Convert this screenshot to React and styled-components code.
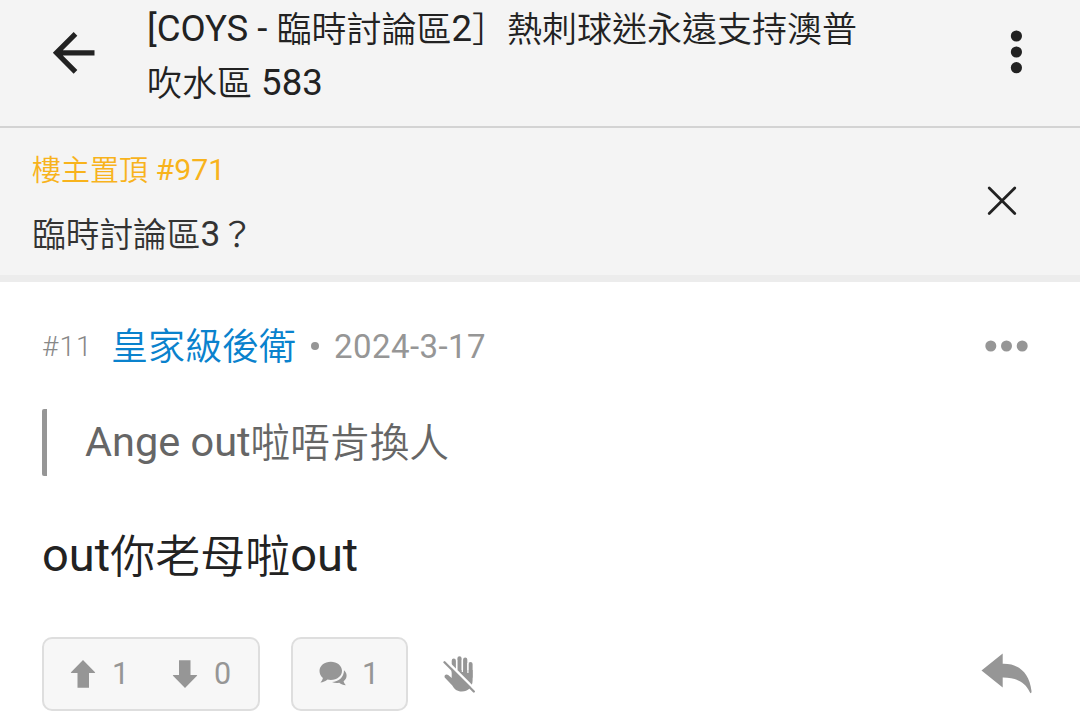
import React from "react";
import styled, { createGlobalStyle } from "styled-components";

const GlobalStyle = createGlobalStyle`
  * {
    box-sizing: border-box;
  }

  body {
    margin: 0;
    background: #fff;
    font-family: Roboto, "Noto Sans CJK TC", sans-serif;
    font-weight: 350;
    color: #222;
  }

  button {
    padding: 0;
    border: none;
    background: none;
    font: inherit;
    color: inherit;
  }

  svg {
    display: block;
  }
`;

const Page = styled.main`
  display: flex;
  flex-direction: column;
  height: 711px;
  overflow: hidden;
`;

const TopBar = styled.header`
  display: flex;
  align-items: flex-start;
  flex: none;
  height: 128px;
  padding: 0 58px 0 51px;
  background: #f4f4f4;
  border-bottom: 2px solid #d3d3d3;
`;

const BackButton = styled.button`
  flex: none;
  width: 96px;
  padding-top: 31px;
`;

// latin runs are set slightly larger than the CJK text and sit a bit above its baseline
const Latin = styled.span`
  font-size: 1.045em;
  font-weight: 400;
  line-height: 1;
  vertical-align: ${(props) => props.$lift || 1}px;
`;

const Title = styled.h1`
  flex: 1;
  margin: 0;
  padding-top: 4px;
  font-size: 35px;
  font-weight: 350;
  line-height: 54px;
  white-space: nowrap;
`;

const MenuButton = styled.button`
  padding-top: 29px;
`;

const Pinned = styled.section`
  display: flex;
  justify-content: space-between;
  align-items: flex-start;
  flex: none;
  height: 154px;
  padding: 21px 62px 0 32px;
  background: #f4f4f4;
  border-bottom: 7px solid #ececec;
`;

const PinnedLabel = styled.div`
  font-size: 29px;
  line-height: 44px;
  color: #f8b31c;
`;

const PinnedText = styled.div`
  margin-top: 19px;
  font-size: 33.7px;
  line-height: 48px;
  color: #333;
`;

const CloseButton = styled.button`
  padding-top: 36px;
`;

const Post = styled.article`
  padding: 40px 48px 0 42px;
`;

const PostHeader = styled.div`
  display: flex;
  align-items: center;
  height: 48px;
  padding-right: 4px;
  color: #969696;
`;

const Floor = styled.span`
  width: 69px;
  color: #888;
  font-size: 28px;
  letter-spacing: 1.1px;
`;

const Author = styled.span`
  width: 185px;
  padding-top: 4px;
  font-size: 37px;
  line-height: 48px;
  color: #0a82cd;
  white-space: nowrap;
`;

const Dot = styled.span`
  width: 8px;
  height: 8px;
  margin: 0 15px;
  border-radius: 50%;
  background: #969696;
`;

const PostDate = styled.span`
  flex: 1;
  font-size: 33px;
  font-weight: 400;
  letter-spacing: 0.45px;
`;

const Quote = styled.blockquote`
  margin: 39px 0 0;
  height: 67px;
  padding: 2px 0 0 38px;
  border-left: 5px solid #969696;
  border-radius: 2px;
  font-size: 39.7px;
  line-height: 66px;
  color: #666;
`;

const Body = styled.p`
  margin: 50px 0 0;
  height: 64px;
  font-size: 45px;
  line-height: 64px;
`;

const Actions = styled.div`
  display: flex;
  align-items: center;
  height: 74px;
  margin-top: 47px;
  color: #969696;
`;

const Pill = styled.div`
  display: flex;
  align-items: center;
  width: ${(props) => props.$width}px;
  height: 74px;
  margin-right: 31px;
  padding-left: 26px;
  background: #f7f7f7;
  border: 2px solid #dedede;
  border-radius: 10px;
`;

const Count = styled.span`
  width: ${(props) => props.$width || 30}px;
  margin-left: ${(props) => props.$gap}px;
  font-size: 30.5px;
  font-weight: 400;
  line-height: 40px;
`;

const MuteButton = styled.button`
  flex: 1;
  margin-left: 4px;
`;

const BackIcon = () => (
  <svg width="44" height="44" viewBox="0 0 44 44" fill="none" stroke="#222" strokeWidth="5.2">
    <path d="M43.500 21.800H5.500M24.500 2.800 5.500 21.800l19 19" />
  </svg>
);

const MenuIcon = () => (
  <svg width="12" height="46" viewBox="0 0 12 46" fill="#222">
    <circle cx="6.4" cy="7" r="5.6" />
    <circle cx="6.4" cy="23" r="5.6" />
    <circle cx="6.4" cy="38.7" r="5.6" />
  </svg>
);

const CloseIcon = () => (
  <svg width="32" height="32" viewBox="0 0 32 32" fill="none" stroke="#222" strokeWidth="2.8" strokeLinecap="round">
    <path d="M3.200 3 28.800 28.600M28.800 3 3.200 28.600" />
  </svg>
);

const MoreIcon = () => (
  <svg width="44" height="12" viewBox="0 0 44 12" fill="#969696">
    <circle cx="6.8" cy="6" r="5.5" />
    <circle cx="22.5" cy="6" r="5.5" />
    <circle cx="38.2" cy="6" r="5.5" />
  </svg>
);

const VoteIcon = ({ down }) => (
  <svg width="26" height="30" viewBox="0 0 26 30" fill="#969696">
    <path
      d="M13 1 25 13.200q.6.8-.5.8H19v14.800H7.500V14H1.500q-1.100 0-.5-.8z"
      transform={down ? "rotate(180 13 15)" : undefined}
    />
  </svg>
);

const CommentsIcon = () => (
  <svg width="28" height="26" viewBox="0 0 28 26" fill="#969696">
    <path d="M11.800.7C18 .7 23 4.600 23 9.800S18 19 11.800 19c-1.200 0-2.300-.1-3.300-.4C6.400 20.300 4 21.400 1.400 21.500c1.300-1.300 2.100-2.700 2.500-4.500C1.600 15.300.5 12.700.5 9.800.5 4.600 5.600.7 11.800.7z" />
    <path d="M25 9.200c1.700 1.500 2.600 3.300 2.600 5.300 0 2.300-1.100 4.300-3 5.700.3 1.500 1 2.800 2.300 4-2.700-.1-4.800-1-6.700-2.500-2.500.5-4.900.3-7.200-.6C19.500 20.700 25 16.200 25 9.200z" />
  </svg>
);

const HandOffIcon = () => (
  <svg width="33" height="38" viewBox="0 0 33 38" fill="none">
    <path
      d="M10.800 17V5.700M16.500 17V3.300M22.200 17V4.500M27.500 22V9"
      stroke="#969696"
      strokeWidth="4.2"
      strokeLinecap="round"
    />
    <path
      d="M8.700 15h20.900v10.500c0 6.500-4.600 11-10.800 11-4.700 0-7.500-2.200-9.500-6L1.700 22.400c-.9-2.200 1.600-3.800 3.500-2.400l3.500 3z"
      fill="#969696"
    />
    <path d="M13.650 5v10M19.350 5v12M24.900 8v10" stroke="#fff" strokeWidth="1.2" />
    <path d="M3 5.500 34 36.500" stroke="#fff" strokeWidth="2.6" />
    <path d="M1.500 7.200 30.800 36.500" stroke="#969696" strokeWidth="2.3" strokeLinecap="round" />
  </svg>
);

const ReplyIcon = () => (
  <svg width="51" height="42" viewBox="0 0 51 42" fill="#969696">
    <path d="M.5 17.600 21.700.6v10.100C37 10.300 48.300 19 50.500 38c.2 2.300-1.200 2.900-1.800 1C44 28.600 34.500 24.500 21.700 24.600v9.900z" />
  </svg>
);

const App = () => {
  return (
    <>
      <GlobalStyle />
      <Page>
        <TopBar>
          <BackButton aria-label="Back">
            <BackIcon />
          </BackButton>
          <Title>
            <Latin>[COYS - </Latin>臨時討論區<Latin>2</Latin>］熱刺球迷永遠支持澳普
            <br />
            吹水區<Latin> 583</Latin>
          </Title>
          <MenuButton aria-label="Menu">
            <MenuIcon />
          </MenuButton>
        </TopBar>
        <Pinned>
          <div>
            <PinnedLabel>
              樓主置頂<Latin> #971</Latin>
            </PinnedLabel>
            <PinnedText>
              臨時討論區<Latin>3</Latin>？
            </PinnedText>
          </div>
          <CloseButton aria-label="Close">
            <CloseIcon />
          </CloseButton>
        </Pinned>
        <Post>
          <PostHeader>
            <Floor>#11</Floor>
            <Author>皇家級後衛</Author>
            <Dot />
            <PostDate>2024-3-17</PostDate>
            <MoreIcon />
          </PostHeader>
          <Quote>
            <Latin>Ange out</Latin>啦唔肯換人
          </Quote>
          <Body>
            <Latin $lift={2}>out</Latin>你老母啦<Latin $lift={2}>out</Latin>
          </Body>
          <Actions>
            <Pill $width={218}>
              <VoteIcon />
              <Count $gap={16} $width={60}>1</Count>
              <VoteIcon down />
              <Count $gap={16}>0</Count>
            </Pill>
            <Pill $width={117}>
              <CommentsIcon />
              <Count $gap={15}>1</Count>
            </Pill>
            <MuteButton aria-label="Mute">
              <HandOffIcon />
            </MuteButton>
            <ReplyIcon />
          </Actions>
        </Post>
      </Page>
    </>
  );
};

export default App;
